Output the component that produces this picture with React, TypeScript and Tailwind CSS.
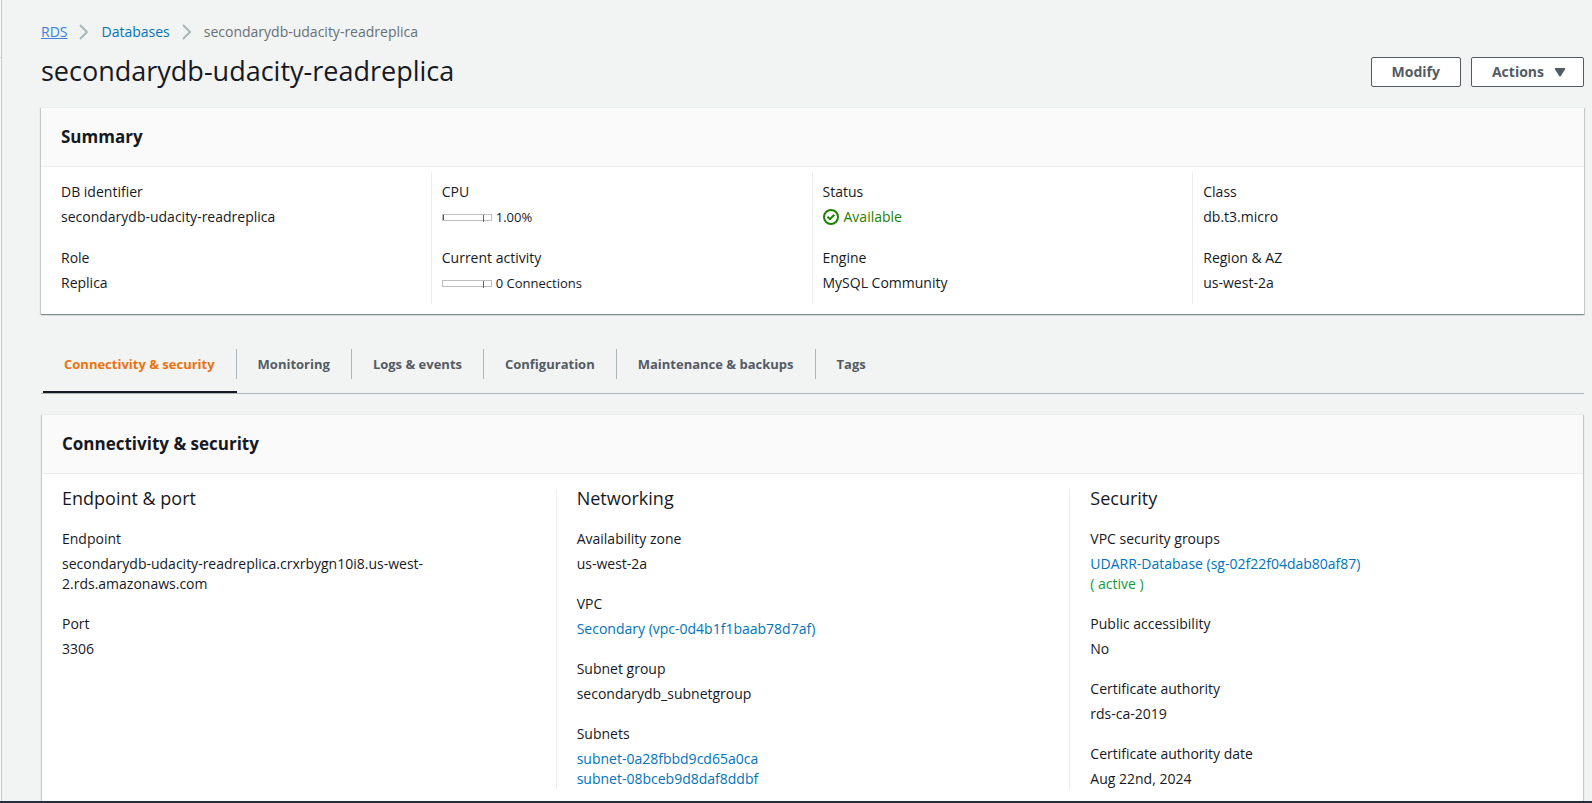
import type { ReactNode } from 'react';

const shadow =
  'shadow-[0_1px_1px_0_rgba(0,28,36,0.3),1px_1px_1px_0_rgba(0,28,36,0.15),-1px_1px_1px_0_rgba(0,28,36,0.15)]';

function Chevron() {
  return (
    <svg width="10" height="16" viewBox="0 0 10 16" fill="none" stroke="#aab7b8" strokeWidth="2" aria-hidden="true">
      <path d="M1 1l7 7-7 7" />
    </svg>
  );
}

function CheckCircle() {
  return (
    <svg width="16" height="16" viewBox="0 0 16 16" fill="none" stroke="#1d8102" strokeWidth="2" aria-hidden="true">
      <circle cx="8" cy="8" r="7" />
      <path d="M4.5 7.8l2.5 2.4 4.3-4.4" />
    </svg>
  );
}

function Meter({ value, children }: { value: number; children: ReactNode }) {
  return (
    <span className="flex items-center gap-1 text-[13px]">
      <span className="flex h-[7px] w-[50px] border border-[#bfbfbf]">
        <span className="bg-[#1f5c99]" style={{ width: `${value}px` }} />
        <span className="ml-auto mr-[7px] h-[7px] w-px bg-[#df3312]" />
      </span>
      {children}
    </span>
  );
}

function Field({ label, children }: { label: string; children: ReactNode }) {
  return (
    <div>
      <dt className="leading-5">{label}</dt>
      <dd className="mt-[5px] leading-5">{children}</dd>
    </div>
  );
}

function Link({ children }: { children: ReactNode }) {
  return (
    <a href="#" className="text-[#0073bb] hover:underline">
      {children}
    </a>
  );
}

function Card({ title, className, children }: { title: string; className?: string; children: ReactNode }) {
  return (
    <section className={`border-t border-[#eaeded] bg-white ${shadow} ${className ?? ''}`}>
      <header className="flex h-[59px] items-center border-b border-[#eaeded] bg-[#fafafa] px-5">
        <h2 className="text-[17px] font-bold leading-[22px]">{title}</h2>
      </header>
      {children}
    </section>
  );
}

const summary: { label: string; value: ReactNode }[][] = [
  [
    { label: 'DB identifier', value: 'secondarydb-udacity-readreplica' },
    { label: 'Role', value: 'Replica' },
  ],
  [
    { label: 'CPU', value: <Meter value={1}>1.00%</Meter> },
    { label: 'Current activity', value: <Meter value={0}>0 Connections</Meter> },
  ],
  [
    {
      label: 'Status',
      value: <span className="flex items-center gap-[5px] text-[#1d8102]"><CheckCircle />Available</span>,
    },
    { label: 'Engine', value: 'MySQL Community' },
  ],
  [
    { label: 'Class', value: 'db.t3.micro' },
    { label: 'Region & AZ', value: 'us-west-2a' },
  ],
];

const details: { heading: string; fields: { label: string; value: ReactNode }[] }[] = [
  {
    heading: 'Endpoint & port',
    fields: [
      {
        label: 'Endpoint',
        value: (
          <>
            secondarydb-udacity-readreplica.crxrbygn10i8.us-west-
            <br />
            2.rds.amazonaws.com
          </>
        ),
      },
      { label: 'Port', value: '3306' },
    ],
  },
  {
    heading: 'Networking',
    fields: [
      { label: 'Availability zone', value: 'us-west-2a' },
      { label: 'VPC', value: <Link>Secondary (vpc-0d4b1f1baab78d7af)</Link> },
      { label: 'Subnet group', value: 'secondarydb_subnetgroup' },
      {
        label: 'Subnets',
        value: (
          <>
            <Link>subnet-0a28fbbd9cd65a0ca</Link>
            <br />
            <Link>subnet-08bceb9d8daf8ddbf</Link>
          </>
        ),
      },
    ],
  },
  {
    heading: 'Security',
    fields: [
      {
        label: 'VPC security groups',
        value: (
          <>
            <Link>UDARR-Database (sg-02f22f04dab80af87)</Link>
            <br />
            <span className="text-[#0f9a3c]">( active )</span>
          </>
        ),
      },
      { label: 'Public accessibility', value: 'No' },
      { label: 'Certificate authority', value: 'rds-ca-2019' },
      { label: 'Certificate authority date', value: 'Aug 22nd, 2024' },
    ],
  },
];

const tabs = ['Connectivity & security', 'Monitoring', 'Logs & events', 'Configuration', 'Maintenance & backups', 'Tags'];

export default function App() {
  return (
    <div className="flex h-screen flex-col bg-[#f2f3f3] font-['Open_Sans',sans-serif] text-sm leading-5 text-[#16191f]">
      <div className="flex min-h-0 flex-1">
        <aside className="w-0.5 shrink-0 border-r border-[#c3c8c8] bg-[#fafafa]">
          <div className="h-[58px] border-b border-[#d5dbdb]" />
        </aside>
        <main className="flex min-w-0 flex-1 flex-col overflow-y-auto pl-[39px] pr-2 pt-[22px] [scrollbar-width:none]">
          <nav aria-label="Breadcrumb" className="flex h-5 items-center gap-3">
            <a href="#" className="text-[#3b82dd] underline">RDS</a>
            <Chevron />
            <Link>Databases</Link>
            <Chevron />
            <span className="text-[#687078]">secondarydb-udacity-readreplica</span>
          </nav>

          <div className="mt-3 flex items-end justify-between">
            <h1 className="text-[27px] leading-[33px]">secondarydb-udacity-readreplica</h1>
            <div className="flex gap-2.5">
              <button type="button" className="h-[30px] rounded-xs border border-[#545b64] bg-white px-5 font-bold text-[#545b64]">
                Modify
              </button>
              <button type="button" className="flex h-[30px] items-center gap-2.5 rounded-xs border border-[#545b64] bg-white pl-5 pr-[17px] font-bold text-[#545b64]">
                Actions
                <svg width="12" height="9" viewBox="0 0 12 9" fill="#545b64" aria-hidden="true">
                  <path d="M1.5 0h9q1 0.3 .6 1.2L6.8 8q-.8.9-1.6 0L.9 1.2Q.5.3 1.5 0z" />
                </svg>
              </button>
            </div>
          </div>

          <Card title="Summary" className="mt-5 shrink-0">
            <div className="grid grid-cols-4 px-2.5 pb-2.5 pt-[5px]">
              {summary.map((column, i) => (
                <dl key={i} className={`flex flex-col gap-[21px] px-2.5 pb-[11px] pt-2.5 ${i < summary.length - 1 ? 'border-r border-[#eaeded]' : ''}`}>
                  {column.map((f) => (
                    <Field key={f.label} label={f.label}>{f.value}</Field>
                  ))}
                </dl>
              ))}
            </div>
          </Card>

          <div role="tablist" className="mt-[26px] flex h-[54px] shrink-0 border-b border-[#aab7b8] pl-0.5">
            {tabs.map((tab, i) => (
              <button
                key={tab}
                type="button"
                role="tab"
                aria-selected={i === 0}
                className={`flex items-start border-b-2 pt-[9px] text-[13px] font-bold ${i === 0 ? 'border-[#16191f] text-[#ec7211]' : 'border-transparent text-[#545b64]'}`}
              >
                <span className={`flex h-[30px] items-center px-[21px] ${i < tabs.length - 1 ? 'border-r border-[#aab7b8]' : ''}`}>{tab}</span>
              </button>
            ))}
          </div>

          <Card title="Connectivity & security" className="mx-px mt-5 flex-1">
            <div className="grid grid-cols-3 pb-5 pt-[15px]">
              {details.map((column, i) => (
                <div key={column.heading} className={`px-5 ${i > 0 ? 'border-l border-[#eaeded]' : ''}`}>
                  <h3 className="text-lg leading-[18px]">{column.heading}</h3>
                  <dl className="mt-[22px] flex flex-col gap-5">
                    {column.fields.map((f) => (
                      <Field key={f.label} label={f.label}>{f.value}</Field>
                    ))}
                  </dl>
                </div>
              ))}
            </div>
          </Card>
        </main>
      </div>
      <footer className="h-0.5 shrink-0 bg-[#232f3e]" />
    </div>
  );
}
